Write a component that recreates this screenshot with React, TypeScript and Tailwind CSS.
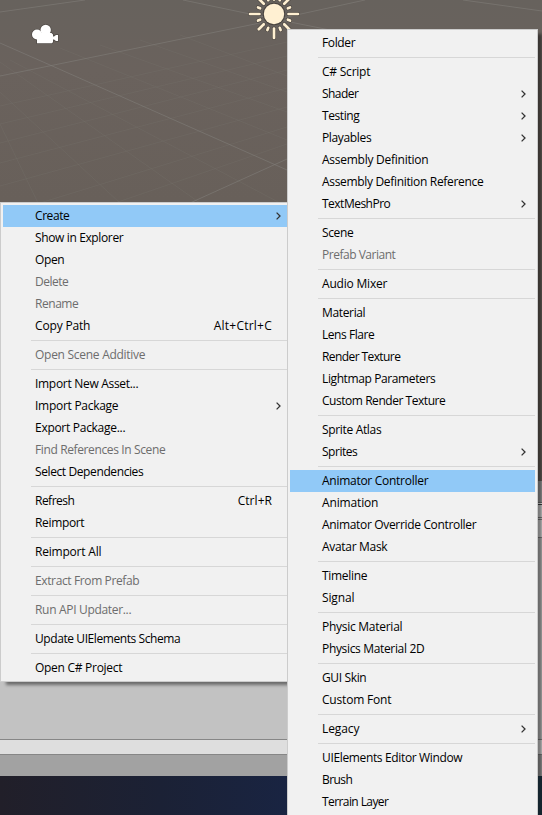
import { useLayoutEffect, useRef } from "react";

type Item = {
  label: string;
  width: number;
  shortcut?: string;
  shortcutWidth?: number;
  sub?: boolean;
  disabled?: boolean;
  active?: boolean;
};
type Entry = Item | null;

const contextItems: Entry[] = [
  { label: "Create", width: 34, sub: true, active: true },
  { label: "Show in Explorer", width: 88 },
  { label: "Open", width: 29 },
  { label: "Delete", width: 33, disabled: true },
  { label: "Rename", width: 43, disabled: true },
  { label: "Copy Path", width: 55, shortcut: "Alt+Ctrl+C", shortcutWidth: 58 },
  null,
  { label: "Open Scene Additive", width: 110, disabled: true },
  null,
  { label: "Import New Asset...", width: 103 },
  { label: "Import Package", width: 83, sub: true },
  { label: "Export Package...", width: 90 },
  { label: "Find References In Scene", width: 130, disabled: true },
  { label: "Select Dependencies", width: 108 },
  null,
  { label: "Refresh", width: 39, shortcut: "Ctrl+R", shortcutWidth: 34 },
  { label: "Reimport", width: 49 },
  null,
  { label: "Reimport All", width: 66 },
  null,
  { label: "Extract From Prefab", width: 104, disabled: true },
  null,
  { label: "Run API Updater...", width: 96, disabled: true },
  null,
  { label: "Update UIElements Schema", width: 145 },
  null,
  { label: "Open C# Project", width: 87 },
];

const createItems: Entry[] = [
  { label: "Folder", width: 33 },
  null,
  { label: "C# Script", width: 48 },
  { label: "Shader", width: 36, sub: true },
  { label: "Testing", width: 37, sub: true },
  { label: "Playables", width: 49, sub: true },
  { label: "Assembly Definition", width: 106 },
  { label: "Assembly Definition Reference", width: 161 },
  { label: "TextMeshPro", width: 68, sub: true },
  null,
  { label: "Scene", width: 31 },
  { label: "Prefab Variant", width: 73, disabled: true },
  null,
  { label: "Audio Mixer", width: 65 },
  null,
  { label: "Material", width: 43 },
  { label: "Lens Flare", width: 52 },
  { label: "Render Texture", width: 78 },
  { label: "Lightmap Parameters", width: 113 },
  { label: "Custom Render Texture", width: 123 },
  null,
  { label: "Sprite Atlas", width: 59 },
  { label: "Sprites", width: 35, sub: true },
  null,
  { label: "Animator Controller", width: 106, active: true },
  { label: "Animation", width: 56 },
  { label: "Animator Override Controller", width: 154 },
  { label: "Avatar Mask", width: 65 },
  null,
  { label: "Timeline", width: 45 },
  { label: "Signal", width: 32 },
  null,
  { label: "Physic Material", width: 80 },
  { label: "Physics Material 2D", width: 102 },
  null,
  { label: "GUI Skin", width: 44 },
  { label: "Custom Font", width: 69 },
  null,
  { label: "Legacy", width: 37, sub: true },
  null,
  { label: "UIElements Editor Window", width: 140 },
  { label: "Brush", width: 30 },
  { label: "Terrain Layer", width: 66 },
];

// Text whose tracking is adjusted so that it fills the given width.
function Label({ text, width }: { text: string; width: number }) {
  const ref = useRef<HTMLSpanElement>(null);
  useLayoutEffect(() => {
    const el = ref.current;
    if (!el) return;
    el.style.letterSpacing = "0px";
    const natural = el.getBoundingClientRect().width;
    el.style.letterSpacing = `${(width + 0.3 - natural) / text.length}px`;
  }, [text, width]);
  return (
    <span ref={ref} className="whitespace-nowrap">
      {text}
    </span>
  );
}

function Menu({ items }: { items: Entry[] }) {
  return (
    <div className="flex flex-col border border-[#cccccc] bg-[#f1f1f1] p-[2px] shadow-[5px_4px_3px_-1px_rgba(0,0,0,0.45)]">
      {items.map((item, i) =>
        item === null ? (
          <div key={i} className="flex h-[7px] shrink-0 items-center pl-7">
            <div className="h-px w-full bg-[#d7d7d7]" />
          </div>
        ) : (
          <div
            key={i}
            className={`flex h-[22px] shrink-0 items-center pl-8 text-[12px] leading-[22px] ${
              item.active ? "bg-[#91c9f7]" : ""
            } ${item.disabled ? "text-[#6d6d6d]" : "text-black"}`}
          >
            <Label text={item.label} width={item.width} />
            <div className="grow" />
            {item.shortcut && (
              <div className="mr-[18px] flex">
                <Label text={item.shortcut} width={item.shortcutWidth ?? 0} />
              </div>
            )}
            {item.sub && (
              <svg className="mr-[9px]" width="5" height="8" viewBox="0 0 5 8">
                <path d="M0.6 0.6 L4 4 L0.6 7.4" fill="none" stroke="#333" strokeWidth="1.3" />
              </svg>
            )}
          </div>
        )
      )}
    </div>
  );
}

const majorLines = [
  "M0 12L85 0",
  "M183 0L250 14L330 30",
  "M0 76L255 24L365 0",
  "M0 43L50 65L287 170",
  "M190 203L287 159",
  "M463 0L542 11",
];
const minorLines = [
  "M0 106L287 42", "M0 124L287 56", "M0 143L287 70", "M0 163L287 88", "M0 186L287 107", "M40 203L287 127",
  "M115 203L287 144", "M0 124L38 203", "M0 92L120 203", "M0 62L200 203", "M10 60L280 203",
  "M60 48L287 140", "M100 45L287 112", "M140 40L287 92", "M180 35L287 76",
];

function Scene() {
  return (
    <div className="h-[481px] shrink-0 bg-linear-to-b from-[#67625d] via-[#6a625d] via-[70px] to-[#68605a] to-[200px]">
      <svg width="542" height="481" viewBox="0 0 542 481">
        <g fill="none" stroke="#77736d" strokeOpacity="0.38" strokeWidth="0.8">
          {minorLines.map((d) => <path key={d} d={d} />)}
        </g>
        <g fill="none" stroke="#7f7c78" strokeOpacity="0.7" strokeWidth="0.9">
          {majorLines.map((d) => <path key={d} d={d} />)}
        </g>
        {([["#4a443f", 4, 11.2], ["#fff0d2", 2.7, 10.2]] as [string, number, number][]).map(([c, w, r]) => (
          <g key={c} stroke={c} strokeWidth={w} strokeLinecap="round">
            <circle cx="274" cy="14" r={r} fill={c} stroke="none" />
            {Array.from({ length: 16 }, (_, i) => (
              <line
                key={i}
                x1={274 + (i % 2 ? 15 : 14.5)}
                x2={274 + (i % 2 ? 17.3 : i % 4 ? 21.5 : 24)}
                y1="14"
                y2="14"
                transform={`rotate(${i * 22.5} 274 14)`}
              />
            ))}
          </g>
        ))}
        {["#504b47", "#ffffff"].map((c, i) => (
          <g key={c} fill={c} stroke={c} strokeWidth={i ? 0 : 1.4}>
            <circle cx="37" cy="34.5" r="5" />
            <circle cx="45.7" cy="30" r="5.2" />
            <path d="M37 33H51.5L53 34.5V36.5H54L56 35H58V41H56L54 39.5H53V42L52 43.3H37Z" />
          </g>
        ))}
      </svg>
    </div>
  );
}

export default function App() {
  return (
    <div className="relative h-[815px] w-[542px] overflow-hidden font-['Open_Sans','Noto_Sans',sans-serif]">
      <div className="flex h-full flex-col">
        <Scene />
        <div className="h-[21px] shrink-0 bg-[#a2a2a2]" />
        <div className="h-[3px] shrink-0 border-y border-t-[#777] border-b-[#444] bg-white" />
        <div className="h-[12px] shrink-0 bg-[#dedede]" />
        <div className="h-[21px] shrink-0 border-y border-[#888] bg-[#dedede]">
          <div className="mt-px h-px bg-[#888]" />
        </div>
        <div className="h-[201px] shrink-0 bg-[#c2c2c2]" />
        <div className="h-[16px] shrink-0 border-y border-[#868686] bg-[#dedede]" />
        <div className="h-[21px] shrink-0 bg-[#a2a2a2]" />
        <div className="grow bg-linear-to-r from-[#211f29] via-[#1b2135] via-[160px] to-[#192442] to-[287px]" />
      </div>
      <div className="absolute top-[202px] left-0 w-[293px]">
        <Menu items={contextItems} />
      </div>
      <div className="absolute top-[29px] left-[287px] w-[251px]">
        <Menu items={createItems} />
      </div>
      <div className="absolute top-[776px] left-[538px] h-[39px] w-[4px] bg-[#14242e]" />
    </div>
  );
}
